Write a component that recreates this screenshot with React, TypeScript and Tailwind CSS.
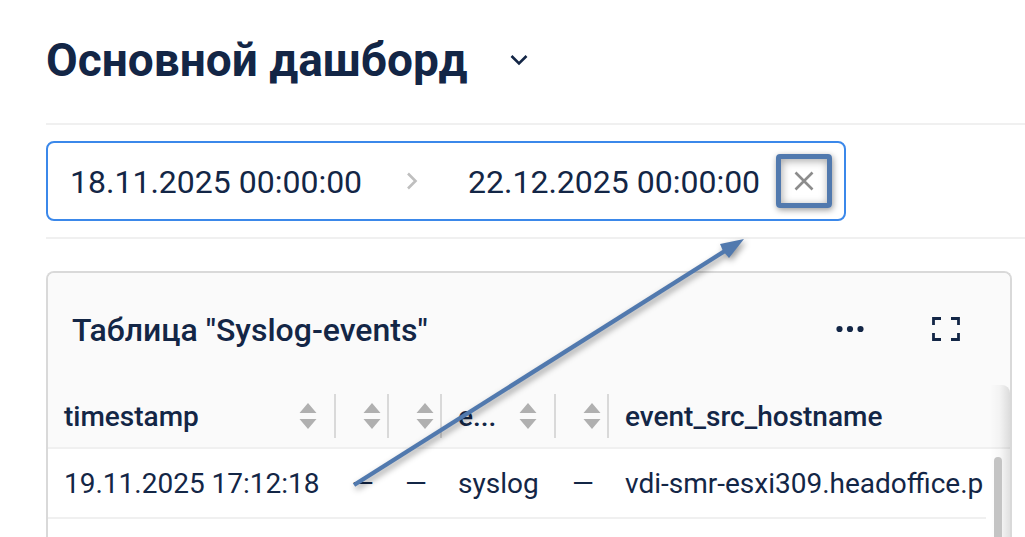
import { useState } from "react";

type Column = {
  key: string;
  title: string;
  sortable: boolean;
  width: string;
};

const COLUMNS: Column[] = [
  { key: "timestamp", title: "timestamp", sortable: true, width: "w-72" },
  { key: "action", title: "", sortable: true, width: "w-[53px]" },
  { key: "object", title: "", sortable: true, width: "w-[53px]" },
  { key: "event", title: "e...", sortable: true, width: "w-[114px]" },
  { key: "subject", title: "", sortable: true, width: "w-[53px]" },
  { key: "host", title: "event_src_hostname", sortable: false, width: "" },
];

const ROWS = [
  ["19.11.2025 17:12:18", "—", "—", "syslog", "—", "vdi-smr-esxi309.headoffice.p"],
];

function SortIcon() {
  return (
    <svg width="18" height="26" viewBox="0 0 18 26" fill="#b0b0b0" className="block">
      <path d="M9 0 17.5 10H.5zM9 26 .5 16h17z" />
    </svg>
  );
}

function DateRange() {
  const [from, setFrom] = useState("18.11.2025 00:00:00");
  const [to, setTo] = useState("22.12.2025 00:00:00");

  return (
    <div className="flex h-20 w-full max-w-[800px] items-center rounded-lg border-2 border-[#3b88ea] pr-3 pl-[22px]">
      <input
        aria-label="Начало периода"
        value={from}
        onChange={(e) => setFrom(e.target.value)}
        className="min-w-0 flex-1 pt-0.5 text-[32px] outline-none"
      />
      <svg
        width="12"
        height="18"
        viewBox="0 0 12 18"
        fill="none"
        stroke="#bfbfbf"
        strokeWidth="2.6"
        className="mr-[50px] shrink-0"
      >
        <path d="m2 1.5 7.5 7.5L2 16.5" />
      </svg>
      <input
        aria-label="Конец периода"
        value={to}
        onChange={(e) => setTo(e.target.value)}
        className="w-[308px] min-w-0 pt-0.5 text-[32px] outline-none"
      />
      <button
        aria-label="Очистить"
        onClick={() => {
          setFrom("");
          setTo("");
        }}
        className="flex h-[54px] w-14 shrink-0 items-center justify-center rounded border-5 border-[#5179ae] shadow-[1px_2px_6px_rgba(0,0,0,0.4),inset_1px_2px_8px_rgba(0,0,0,0.35)]"
      >
        <svg width="20" height="20" viewBox="0 0 20 20" stroke="#8c8c8c" strokeWidth="2.6">
          <path d="m1.5 1.5 17 17M18.5 1.5l-17 17" />
        </svg>
      </button>
    </div>
  );
}

function EventsTable() {
  return (
    <table className="w-full table-fixed border-separate border-spacing-0 text-left text-[28px] leading-8">
      <colgroup>
        {COLUMNS.map((col) => (
          <col key={col.key} className={col.width} />
        ))}
        <col className="w-6" />
      </colgroup>
      <thead>
        <tr>
          {COLUMNS.map((col) => (
            <th
              key={col.key}
              colSpan={col.sortable ? 1 : 2}
              className="h-16 border-b-2 border-[#f0f0f0] bg-[#fafafa] p-0 font-medium"
            >
              <div
                className={`flex h-11 items-center ${col.title ? "pl-4" : ""} ${
                  col.sortable ? "justify-between border-r-2 border-[#d9d9d9]" : ""
                } ${col.key === "timestamp" || col.key === "event" ? "pr-[17px]" : "pr-[6px]"}`}
              >
                <span className="pt-0.5">{col.title}</span>
                {col.sortable && (
                  <button aria-label="Сортировать">
                    <SortIcon />
                  </button>
                )}
              </div>
            </th>
          ))}
        </tr>
      </thead>
      <tbody>
        {ROWS.map((row) => (
          <tr key={row[0]}>
            {row.map((cell, i) => (
              <td
                key={COLUMNS[i].key}
                className="h-[70px] overflow-hidden border-b-2 border-[#f0f0f0] p-0 pt-0.5 pl-4 whitespace-nowrap"
              >
                {cell}
              </td>
            ))}
            <td />
          </tr>
        ))}
      </tbody>
    </table>
  );
}

function Widget() {
  return (
    <section className="mt-8 mr-[13px] flex flex-1 flex-col rounded-t-lg border-2 border-b-0 border-[#d9d9d9]">
      <header className="flex h-28 items-center rounded-t-md bg-[#fafafa] pr-[50px] pl-6">
        <h2 className="flex-1 pt-0.5 text-[32px] font-medium">Таблица "Syslog-events"</h2>
        <button aria-label="Меню" className="mr-[67px]">
          <svg width="30" height="8" viewBox="0 0 30 8" fill="currentColor" className="block">
            <circle cx="4.5" cy="4" r="3.1" />
            <circle cx="15" cy="4" r="3.1" />
            <circle cx="25.5" cy="4" r="3.1" />
          </svg>
        </button>
        <button aria-label="На весь экран">
          <svg
            width="28"
            height="24"
            viewBox="0 0 28 24"
            fill="none"
            stroke="currentColor"
            strokeWidth="2.8"
            className="block"
          >
            <path d="M1.5 8V1.5H9M19 1.5h7.5V8M26.5 16v6.5H19M9 22.5H1.5V16" />
          </svg>
        </button>
      </header>
      <div className="relative flex-1">
        <EventsTable />
        <div className="absolute inset-y-0 right-0 w-5 rounded-tr-lg bg-linear-to-r from-transparent via-black/3 to-black/12" />
        <div className="absolute top-[72px] right-2 bottom-0 w-2 rounded-t bg-[#c4c4c4]" />
      </div>
    </section>
  );
}

export default function App() {
  return (
    <main className="relative flex min-h-screen flex-col overflow-hidden bg-white pl-[46px] font-[Roboto,sans-serif] text-[#132646]">
      <div className="flex h-[125px] items-center border-b-2 border-[#f0f0f0] pb-1">
        <h1 className="text-[46px] leading-none font-bold">Основной дашборд</h1>
        <button aria-label="Выбрать дашборд" className="ml-[42px]">
          <svg
            width="18"
            height="12"
            viewBox="0 0 18 12"
            fill="none"
            stroke="currentColor"
            strokeWidth="2.6"
            className="block"
          >
            <path d="m1.5 2 7.5 7.5L16.5 2" />
          </svg>
        </button>
      </div>
      <div className="border-b-2 border-[#f0f0f0] py-4">
        <DateRange />
      </div>
      <Widget />

      <svg
        width="410"
        height="270"
        viewBox="0 0 410 270"
        className="pointer-events-none absolute top-[228px] left-[346px] drop-shadow-[2px_3px_3px_rgba(0,0,0,0.4)]"
      >
        <path d="M8 257 382 21" stroke="#5179ae" strokeWidth="4.4" />
        <path d="m398 11-24 5 3 7 6 7z" fill="#5179ae" />
      </svg>
    </main>
  );
}
